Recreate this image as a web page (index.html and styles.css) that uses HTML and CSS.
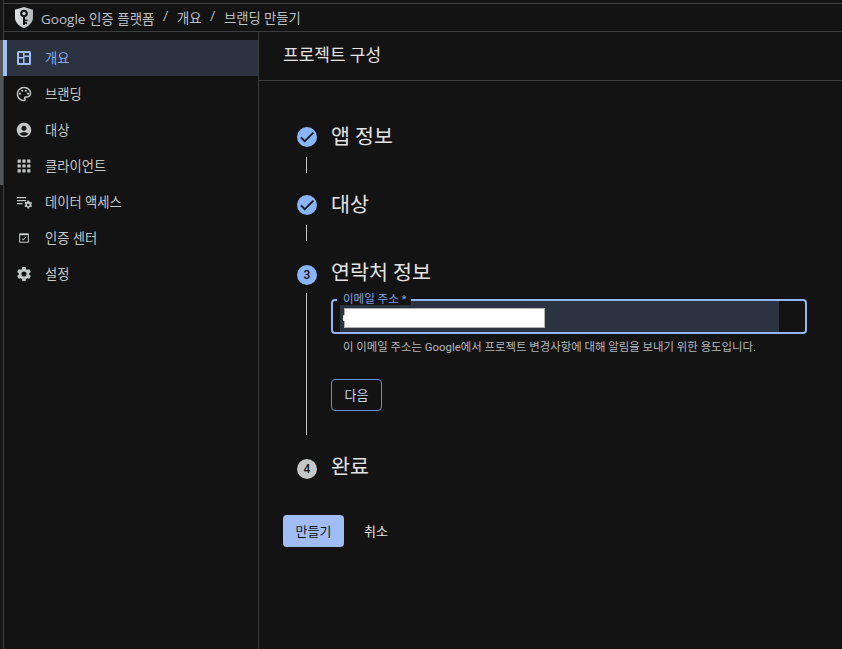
FILE: index.html
```html
<!DOCTYPE html>
<html lang="ko">
<head>
<meta charset="utf-8">
<title>Google 인증 플랫폼</title>
<link rel="stylesheet" href="styles.css">
</head>
<body>
<div class="rail"><div class="rail-thumb"></div></div>
<div class="app">
  <header class="topbar">
    <svg class="logo" viewBox="1 .5 18 21" aria-hidden="true">
      <defs>
        <linearGradient id="shield-shade" x1="0" y1="0" x2="1" y2="0">
          <stop offset="0" stop-color="#e2e3e5"/>
          <stop offset="1" stop-color="#b4b5b7"/>
        </linearGradient>
      </defs>
      <path class="logo-shield" d="M10 .5 19 3.2v7.600c0 5-3.600 8.900-9 10.700-5.400-1.800-9-5.700-9-10.700V3.200z"/>
      <circle class="logo-key" cx="10" cy="7" r="3.800"/>
      <circle class="logo-hole" cx="10" cy="7" r="1.700"/>
      <path class="logo-key" d="M9 10h2v8.500H9zM11 13h2.500v1.800H11zM11 15.800h2v1.800h-2z"/>
    </svg>
    <nav class="crumbs"><span class="crumb-brand">Google 인증 플랫폼</span><span class="sep">/</span><span>개요</span><span class="sep">/</span><span>브랜딩 만들기</span></nav>
  </header>
  <div class="body">
    <aside class="side">
      <a class="item active">
        <svg class="ico" viewBox="0 0 16 16" aria-hidden="true"><path class="fill-evenodd" d="M2.500 1h11A1.500 1.500 0 0 1 15 2.500v11a1.500 1.500 0 0 1-1.500 1.500h-11A1.500 1.500 0 0 1 1 13.500v-11A1.500 1.500 0 0 1 2.500 1zM3 3v4h4V3zm5.500 0v2.500H13V3zM3 8.500V13h4V8.500zm5.500-1.500v6H13V7z"/></svg>
        <span>개요</span>
      </a>
      <a class="item">
        <svg class="ico" viewBox="1 1 22 22" aria-hidden="true"><path d="M12 22C6.490 22 2 17.510 2 12S6.490 2 12 2s10 4.040 10 9c0 3.310-2.690 6-6 6h-1.770c-.28 0-.5.22-.5.5 0 .12.05.23.13.33.41.47.64 1.060.64 1.670 0 1.380-1.120 2.500-2.500 2.500zm0-18c-4.410 0-8 3.590-8 8s3.590 8 8 8c.28 0 .5-.22.5-.5 0-.16-.08-.28-.14-.35-.41-.46-.63-1.050-.63-1.650 0-1.380 1.120-2.500 2.500-2.500H16c2.210 0 4-1.790 4-4 0-3.860-3.590-7-8-7z"/><circle cx="6.500" cy="11.500" r="1.500"/><circle cx="9.500" cy="7.500" r="1.500"/><circle cx="14.500" cy="7.500" r="1.500"/><circle cx="17.500" cy="11.500" r="1.500"/></svg>
        <span>브랜딩</span>
      </a>
      <a class="item">
        <svg class="ico" viewBox="1 1 22 22" aria-hidden="true"><path d="M12 2C6.480 2 2 6.480 2 12s4.480 10 10 10 10-4.480 10-10S17.520 2 12 2zm0 4c1.930 0 3.500 1.570 3.500 3.500S13.930 13 12 13s-3.500-1.570-3.500-3.500S10.070 6 12 6zm0 14c-2.030 0-4.430-.82-6.140-2.880C7.550 15.800 9.680 15 12 15s4.450.8 6.140 2.120C16.430 19.180 14.030 20 12 20z"/></svg>
        <span>대상</span>
      </a>
      <a class="item">
        <svg class="ico" viewBox="2 2 20 20" aria-hidden="true"><path d="M4 8h4V4H4v4zm6 12h4v-4h-4v4zm-6 0h4v-4H4v4zm0-6h4v-4H4v4zm6 0h4v-4h-4v4zm6-10v4h4V4h-4zm-6 4h4V4h-4v4zm6 6h4v-4h-4v4zm0 6h4v-4h-4v4z"/></svg>
        <span>클라이언트</span>
      </a>
      <a class="item">
        <svg class="ico" viewBox="0 0 16 16" aria-hidden="true"><path d="M1 3h9v1.200H1zM1 6h9v1.200H1zM1 9h5.500v1.200H1z"/><path d="M11.500 6.600h1.600l.25 1.100.85.5 1.050-.35.8 1.400-.8.75v1l.8.75-.8 1.400-1.050-.35-.85.5-.25 1.100h-1.600l-.25-1.100-.85-.5-1.050.35-.8-1.400.8-.75v-1l-.8-.75.8-1.400 1.050.35.85-.5zm.8 3.100a1.300 1.300 0 1 0 0 2.600 1.300 1.300 0 0 0 0-2.600z"/></svg>
        <span>데이터 액세스</span>
      </a>
      <a class="item">
        <svg class="ico" viewBox="-2 -2 28 28" aria-hidden="true"><path d="M5 3.500h14A1.500 1.500 0 0 1 20.500 5v14a1.500 1.500 0 0 1-1.500 1.500H5A1.500 1.500 0 0 1 3.500 19V5A1.500 1.500 0 0 1 5 3.500zM5.300 7v11.700h13.400V7z"/><path d="M10.600 16.200 7.900 13.500l1.100-1.100 1.600 1.600 4.300-4.300 1.100 1.100z"/></svg>
        <span>인증 센터</span>
      </a>
      <a class="item">
        <svg class="ico" viewBox="1 1 22 22" aria-hidden="true"><path d="M19.140 12.940c.04-.3.06-.61.06-.94 0-.32-.02-.64-.07-.94l2.030-1.580c.18-.14.23-.41.12-.61l-1.920-3.320c-.12-.22-.37-.29-.59-.22l-2.390.96c-.5-.38-1.030-.7-1.620-.94l-.36-2.540c-.04-.24-.24-.41-.48-.41h-3.840c-.24 0-.43.17-.47.41l-.36 2.540c-.59.24-1.130.57-1.620.94l-2.390-.96c-.22-.08-.47 0-.59.22L2.740 8.870c-.12.21-.08.47.12.61l2.030 1.580c-.05.3-.09.63-.09.94s.02.64.07.94l-2.030 1.580c-.18.14-.23.41-.12.61l1.920 3.320c.12.22.37.29.59.22l2.390-.96c.5.38 1.030.7 1.620.94l.36 2.540c.05.24.24.41.48.41h3.840c.24 0 .44-.17.47-.41l.36-2.540c.59-.24 1.130-.56 1.620-.94l2.390.96c.22.08.47 0 .59-.22l1.920-3.320c.12-.22.07-.47-.12-.61l-2.010-1.580zM12 15.600c-1.980 0-3.600-1.620-3.600-3.600s1.620-3.600 3.600-3.600 3.600 1.620 3.600 3.600-1.620 3.600-3.600 3.600z"/></svg>
        <span>설정</span>
      </a>
    </aside>
    <main class="main">
      <h1 class="page-title">프로젝트 구성</h1>
      <div class="content">
        <section class="step step-done">
          <div class="step-head">
            <span class="badge"><svg class="check" viewBox="0 0 24 24" aria-hidden="true"><path d="M9 16.170 4.830 12l-1.420 1.410L9 19 21 7l-1.410-1.410z"/></svg></span>
            <h2>앱 정보</h2>
          </div>
          <div class="step-gap"><i class="line"></i></div>
        </section>
        <section class="step step-done">
          <div class="step-head">
            <span class="badge"><svg class="check" viewBox="0 0 24 24" aria-hidden="true"><path d="M9 16.170 4.830 12l-1.420 1.410L9 19 21 7l-1.410-1.410z"/></svg></span>
            <h2>대상</h2>
          </div>
          <div class="step-gap step-gap-wide"><i class="line"></i></div>
        </section>
        <section class="step">
          <div class="step-head">
            <span class="badge">3</span>
            <h2>연락처 정보</h2>
          </div>
          <div class="step-body">
            <i class="line line-long"></i>
            <div class="form">
              <div class="field">
                <span class="field-label">이메일 주소 *</span>
                <div class="field-fill"><div class="redact"></div></div>
              </div>
              <p class="hint">이 이메일 주소는 Google에서 프로젝트 변경사항에 대해 알림을 보내기 위한 용도입니다.</p>
              <button class="btn-outline" type="button">다음</button>
            </div>
          </div>
        </section>
        <section class="step">
          <div class="step-head">
            <span class="badge badge-gray">4</span>
            <h2>완료</h2>
          </div>
        </section>
        <div class="actions">
          <button class="btn-primary" type="button">만들기</button>
          <button class="btn-text" type="button">취소</button>
        </div>
      </div>
    </main>
  </div>
</div>
</body>
</html>
```
FILE: styles.css
```css
* { box-sizing: border-box; }
html, body { margin: 0; height: 100%; }
body {
  display: flex;
  width: 842px;
  height: 649px;
  overflow: hidden;
  background: #131314;
  color: #e3e3e3;
  font-family: "Roboto", "Noto Sans CJK KR", sans-serif;
  font-size: 14px;
}
.rail {
  flex: 0 0 4px;
  background: #171718;
  border-right: 1px solid #3c3d3f;
}
.rail-thumb { height: 145px; margin-top: 40px; background: #555658; }
.app { flex: 1; display: flex; flex-direction: column; min-width: 0; }
.topbar {
  flex: 0 0 29px;
  display: flex;
  align-items: center;
  gap: 7px;
  margin-top: 3px;
  padding-left: 11px;
  border-top: 1px solid #444547;
  border-bottom: 1px solid #3c3d3f;
}
.logo { width: 18px; height: 21px; flex: none; }
.logo-shield { fill: url(#shield-shade); }
.logo-hole { fill: #d2d3d5; }
.logo-key { fill: #131314; }
.crumbs { display: flex; gap: 8.500px; margin-left: 1px; font-size: 13.300px; color: #bdc1c6; white-space: nowrap; }
.crumb-brand { font-family: "Open Sans", "Noto Sans CJK KR", sans-serif; font-size: 13.500px; }
.body { flex: 1; display: flex; min-height: 0; }
.side {
  flex: 0 0 255px;
  padding-top: 8px;
  border-right: 1px solid #3c3d3f;
}
.item {
  display: flex;
  align-items: center;
  height: 36px;
  padding-left: 12px;
  gap: 13px;
  font-size: 13.300px;
  color: #c4c7c5;
}
.item span { padding-bottom: 2px; }
.ico { width: 16px; height: 16px; flex: none; fill: #c4c7c5; }
.item.active {
  background: #2b3240;
  color: #86aaea;
  box-shadow: inset 3px 0 0 #a0bdf6, -1px 0 0 #a0bdf6;
}
.item.active .ico { fill: #a0bdf6; }
.fill-evenodd { fill-rule: evenodd; }
.main { flex: 1; min-width: 0; }
.page-title {
  margin: 0;
  height: 49px;
  padding-left: 24px;
  font-size: 17px;
  font-weight: 400;
  line-height: 47px;
  color: #e3e3e3;
  border-bottom: 1px solid #3c3d3f;
}
.content { padding: 44px 35px 0 24px; }
.step-head { display: flex; align-items: center; gap: 14px; height: 24px; }
.step-head h2 {
  margin: 0;
  padding-bottom: 4px;
  font-size: 20.600px;
  font-weight: 400;
  line-height: 24px;
  color: #e3e3e3;
}
.step-done .step-head h2 { padding-bottom: 0; }
.badge {
  flex: 0 0 20px;
  width: 20px;
  height: 20px;
  margin-left: 14px;
  border-radius: 50%;
  display: flex;
  align-items: center;
  justify-content: center;
  background: #8ab4f8;
  color: #131314;
  font-size: 12px;
  font-weight: 500;
}
.badge-gray { background: #c4c7c5; }
.check { width: 18px; height: 18px; fill: #131314; stroke: #131314; stroke-width: .5; }
.line { display: block; width: 1px; background: #c4c7c5; }
.step-gap { padding: 8px 0 0 23px; height: 44px; }
.step-gap-wide { height: 46px; }
.step-gap .line { height: 16px; }
.step-body { display: flex; padding: 6px 0 0 23px; height: 170px; }
.line-long { height: 142px; flex: none; }
.form { flex: 1; margin-left: 24px; padding-top: 6px; }
.field {
  position: relative;
  height: 35px;
  border: 2px solid #93b5f5;
  border-radius: 4px;
}
.field-label {
  position: absolute;
  top: -8px;
  left: 4px;
  padding: 0 4px 0 6px;
  height: 12px;
  font-size: 11.500px;
  line-height: 12px;
  color: #7fa3e3;
  background: #131314;
  white-space: nowrap;
}
.field-fill { height: 31px; margin: 0 26px 0 7px; background: #2b3240; padding: 7px 0 0 4px; }
.redact { position: relative; width: 201px; height: 20px; background: #fff; box-shadow: inset 0 0 0 1px #b0b2b4; }
.redact::before {
  content: "";
  position: absolute;
  top: 7px;
  left: -1px;
  width: 2px;
  height: 6px;
  border-radius: 1px;
  background: #fff;
}
.hint { margin: 5px 0 0 12px; font-size: 11.400px; line-height: 16px; color: #b4b8bc; white-space: nowrap; }
.btn-outline {
  display: block;
  width: 51px;
  height: 32px;
  margin-top: 24px;
  padding: 0 0 2px;
  border: 1px solid #6a8fd6;
  border-radius: 4px;
  background: transparent;
  color: #c5d8f8;
  font: inherit;
  font-size: 13px;
}
.actions { display: flex; align-items: center; gap: 7px; margin-top: 34px; }
.btn-primary {
  width: 61px;
  height: 32px;
  padding: 0 0 2px;
  border: 0;
  border-radius: 4px;
  background: #a0bdf6;
  color: #131314;
  font: inherit;
  font-size: 13px;
}
.btn-text {
  width: 50px;
  height: 32px;
  padding: 0 0 2px;
  border: 0;
  background: transparent;
  color: #e3e3e3;
  font: inherit;
  font-size: 13px;
}
```
